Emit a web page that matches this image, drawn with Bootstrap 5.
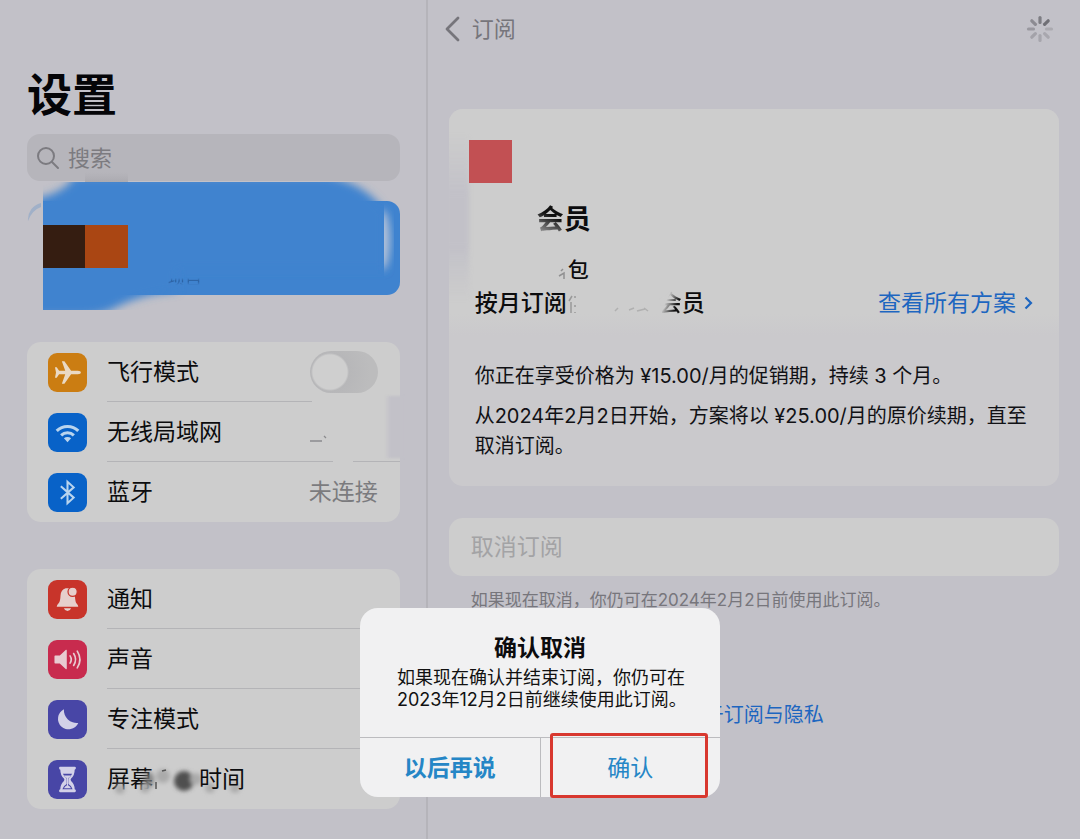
<!DOCTYPE html>
<html lang="zh-CN">
<head>
<meta charset="utf-8">
<meta name="viewport" content="width=device-width, initial-scale=1">
<title>设置 - 订阅</title>
<link href="https://cdn.jsdelivr.net/npm/bootstrap@5.3.0/dist/css/bootstrap.min.css" rel="stylesheet">
<style>
:root{--page:#c2c1c8;--panel:#cdcdcd;--line:#b4b4b7;--blue:#1d66c0}
body{font-family:Inter,"Noto Sans CJK SC",sans-serif;background:var(--page);color:#0c0c0e;font-size:23px;line-height:30px}
.sidebar{flex:0 0 39.6%;padding:65px 26px 30px 27px;border-right:2px solid #b5b4ba}
.page-title{font-size:45px;line-height:62px;font-weight:700;margin:0 0 7px;color:#050508}
.search-box{height:47px;border-radius:13px;background:#b6b5bb;padding-left:9px;gap:7px;margin-bottom:20px}
.search-box input,.search-box input:focus{background:none;border:0;padding:0;box-shadow:none;font-size:22px;line-height:30px;color:#333}
.search-box input::placeholder{color:#7c7b80;opacity:1}
.account{height:94px;margin-bottom:47px;display:block}
.account svg{position:absolute;left:0;top:-31px;z-index:1}
.account-note{position:absolute;left:141px;top:68px;z-index:2;font-size:17px;line-height:20px;color:#2a5f9f;-webkit-mask-image:linear-gradient(transparent 45%,#000 60%,transparent 80%);mask-image:linear-gradient(transparent 45%,#000 60%,transparent 80%)}
.group{--bs-list-group-bg:var(--panel);border-radius:14px;background:var(--panel);margin-bottom:47px}
.group-row{height:60px;padding-left:21px;padding-right:22px;gap:20px;color:#0c0c0e;text-decoration:none;position:relative}
.group-row:not(:last-child)::after{content:"";position:absolute;left:80px;right:0;bottom:0;height:1px;background:var(--line)}
.group-row.cut-short::after{right:88px}
.group-row.cut-gap::after{background:linear-gradient(90deg,var(--line) 226px,transparent 226px,transparent 246px,var(--line) 246px)}
.tile{width:39px;height:39px;border-radius:9px;flex:none}
.tile svg{display:block;width:100%;height:100%}
.t-orange{background:#cb7d12}.t-blue{background:#0862c8}.t-red{background:#c8342a}.t-pink{background:#c82b4e}.t-indigo{background:#4846a6}
.value{color:#7b7b7e}
.form-check-input.toggle{width:68px;height:42px;margin:0;border:0;border-radius:21px;background:radial-gradient(circle at 20px 50%,#cfcfcf 17px,#b7b7b9 19px,#bcbcbd 40px)}
.worn::before{content:"";position:absolute;right:-3px;top:-6px;width:18px;height:62px;background:linear-gradient(90deg,transparent,var(--page) 5px);filter:blur(1px)}
.detail{padding:0 21px 30px 21px;min-width:0}
.topbar{height:58px;margin-bottom:51px;margin-left:-4px}
.back{color:#76757b;text-decoration:none;font-size:22px;gap:12px}
.plan{border-radius:14px;overflow:hidden;background:#cac9cc;margin-bottom:32px;position:relative}
.plan-head{background:linear-gradient(var(--panel) 205px,#cac9cc 226px);padding:31px 26px 16px 20px;min-height:226px;position:relative}
.plan-head::before{content:"";position:absolute;left:-4px;top:26px;width:24px;height:165px;background:linear-gradient(transparent,var(--page) 60px,var(--page) 110px,transparent);filter:blur(2px)}
.logo{width:43px;height:43px;background:#c25053;position:relative}
.plan-name{font-size:27px;line-height:36px;font-weight:700;margin:19px 0 0 68px}
.faded{background:linear-gradient(25deg,#b5b5b6,#111 60%);-webkit-background-clip:text;background-clip:text;color:transparent}
.faded-end{background:linear-gradient(115deg,#cdcdcd 35%,#111 70%);-webkit-background-clip:text;background-clip:text;color:transparent}
.plan-pack{font-size:21px;line-height:30px;font-weight:500;margin:17px 0 0 89px;gap:1px}
.plan-term{font-weight:500;margin-top:3px;padding-left:6px}
.blue-link{color:var(--blue);text-decoration:none}
.plan-body{font-size:20px;padding:26px 26px 26px;color:#111115}
.plan-body p{margin:0 0 10px}
.plan-body p:last-child{margin:0 0 -1px}
.cancel{height:58px;border-radius:14px;background:var(--panel);border:0;color:#a3a3a5;text-align:left;padding:0 22px;width:100%;display:block}
.note{font-size:17px;line-height:24px;color:#77767c;margin:12px 22px 88px}
.privacy{font-size:20px;line-height:30px}
.sheet-layer{position:fixed;inset:0;z-index:10;padding-bottom:42px;pointer-events:none}
.sheet{width:360px;border-radius:18px;background:#f1f1f2;pointer-events:auto}
.sheet h2{font-size:23px;line-height:30px;font-weight:700;margin:0;padding-top:25px;text-align:center}
.sheet p{font-size:18px;line-height:22px;margin:0;padding:4px 24px 26px 37px;color:#111}
.sheet-actions{border-top:1px solid #bcbcbf}
.sheet-actions button{flex:1 1 0;height:59px;border:0;background:none;color:#2586c6;position:relative;padding:0}
.sheet-actions button+button{border-left:1px solid #bcbcbf}
.ring{position:absolute;left:9px;right:12px;top:-5px;bottom:-1px;border:3px solid #d8382f;border-radius:3px}
</style>
</head>
<body>
<div class="d-flex min-vh-100">
  <aside class="sidebar">
    <h1 class="page-title">设置</h1>
    <label class="search-box d-flex align-items-center" for="q">
      <svg class="flex-shrink-0" width="25" height="26" viewBox="0 0 25 26" fill="none" stroke="#7c7b80" stroke-width="2" stroke-linecap="round"><circle cx="10" cy="11" r="8"/><path d="M16 17l6 6"/></svg>
      <input id="q" class="form-control" type="search" placeholder="搜索">
    </label>
    <a class="account position-relative" href="#" aria-label="项目">
      <svg width="373" height="145" viewBox="0 0 373 145">
        <defs><filter id="soft" x="-20%" y="-30%" width="140%" height="160%"><feGaussianBlur stdDeviation="4"/></filter><clipPath id="area"><path d="M16 12H373V140H16z"/></clipPath><clipPath id="edge"><path d="M357 30h16v80h-16z"/></clipPath>
        <linearGradient id="fade" x2="0" y2="1"><stop stop-color="#adacb2" stop-opacity="0"/><stop offset="1" stop-color="#a9a8ae"/></linearGradient></defs>
        <path d="M58 2h43v11H58z" fill="url(#fade)"/>
        <path d="M1 51a17 17 0 0 1 13-18v4Q5 40 1 51z" fill="#7d9fc8" opacity=".5"/>
        <path d="M16 31H360a13 13 0 0 1 13 13V112a13 13 0 0 1-13 13H16z" fill="#3f83cf"/>
        <g clip-path="url(#area)"><path d="M0 30Q35 26 48 6H300Q340 14 358 42V100H150V121Q112 124 84 140Q70 146 50 146H0z" fill="#3f83cf" filter="url(#soft)"/></g>
        <path d="M16 55h43v43H16z" fill="#351d11"/><path d="M58 55h43v43H58z" fill="#aa4613"/>
        <g clip-path="url(#edge)"><ellipse cx="355" cy="70" rx="8" ry="30" fill="#b4c2d8" filter="url(#soft)"/></g>
      </svg>
      <span class="account-note">项目</span>
    </a>

    <div class="group list-group">
      <div class="group-row cut-short d-flex align-items-center">
        <span class="tile t-orange"><svg viewBox="0 0 38 38" fill="#ead9c4"><path d="M32 19q0 1.600-3 1.700h-6.500L16 30h-2.500l3.300-9.300h-6L8.500 24H6.800l1-5-1-5h1.700l2.300 3.300h6L13.500 8H16l6.500 9.300H29q3 .1 3 1.700z"/></svg></span>
        <label class="flex-grow-1" for="fly">飞行模式</label>
        <input id="fly" class="form-check-input toggle" type="checkbox" role="switch">
      </div>
      <a href="#" class="group-row cut-gap worn d-flex align-items-center">
        <span class="tile t-blue"><svg viewBox="0 0 38 38" fill="none" stroke="#b9d4ee" stroke-width="3"><path d="M8.500 17.500a15 15 0 0 1 21 0M12.800 21.800a9 9 0 0 1 12.400 0"/><path d="M15.500 24.700a5 5 0 0 1 7 0L19 28.500z" fill="#b9d4ee" stroke="none"/></svg></span>
        <span class="flex-grow-1">无线局域网</span>
        <svg width="69" height="30" viewBox="0 0 69 30" fill="none" stroke="#8b8b8e" stroke-width="1.300"><path d="M1 24h12M15 19l2 2"/></svg>
      </a>
      <a href="#" class="group-row d-flex align-items-center">
        <span class="tile t-blue"><svg viewBox="0 0 38 38" fill="none" stroke="#b9d4ee" stroke-width="2"><path d="M12.500 13l12.500 11-6 5.500v-21l6 5.500L12.500 25"/></svg></span>
        <span class="flex-grow-1">蓝牙</span><span class="value">未连接</span>
      </a>
    </div>

    <div class="group list-group mb-0">
      <a href="#" class="group-row d-flex align-items-center">
        <span class="tile t-red"><svg viewBox="0 0 38 38" fill="#e6cfcc"><path d="M8.500 26q0-1.500 2-3.500 1.500-2 1.700-7.500.4-5.500 5-7h3.600q5 1.500 5.400 7 .3 5.500 1.300 7.500 2 2 2 3.500zM15.500 27.500h7q-1 2.800-3.500 2.800t-3.500-2.800z"/><circle cx="24" cy="11.500" r="4.500" stroke="#c8342a" stroke-width="1.200"/></svg></span>
        <span>通知</span>
      </a>
      <a href="#" class="group-row d-flex align-items-center">
        <span class="tile t-pink"><svg viewBox="0 0 38 38" fill="#e8cbd1"><path d="M7 15h4.500l6-5.500q.8-.3.8.8v17.400q0 1-.8.700L11.500 23H7q-.7 0-.7-.8v-6.400q0-.8.700-.8z"/><path d="M21.500 15.500q2.300 3.500 0 7M25 13.200q3.700 5.800 0 11.600M28.500 10.800q5.300 8.200 0 16.400" fill="none" stroke="#e8cbd1" stroke-width="1.600" stroke-linecap="round"/></svg></span>
        <span>声音</span>
      </a>
      <a href="#" class="group-row d-flex align-items-center">
        <span class="tile t-indigo"><svg viewBox="0 0 38 38" fill="#d3d1e8"><path d="M15.500 9A12.500 12.500 0 0 0 29.500 22.300 10.300 10.300 0 1 1 15.500 9z"/></svg></span>
        <span>专注模式</span>
      </a>
      <a href="#" class="group-row d-flex align-items-center">
        <span class="tile t-indigo"><svg viewBox="0 0 38 38"><path d="M12 6.500h14q1.200 0 1.200 1.300T26 9.500q0 5.500-3.500 8.500-1 1.200 0 2.400Q26 23.500 26 28.500q1.200.2 1.200 1.500T26 31.500H12q-1.200 0-1.200-1.500t1.200-1.500q0-5 3.500-8.100 1-1.200 0-2.400Q12 15 12 9.500q-1.200-.2-1.200-1.700T12 6.500z" fill="#d3d1e8"/><path d="M14.500 13.500h9q-1 2.500-3.700 4.500v5.500q3 1.500 4.200 5h-10q1.200-3.500 4.200-5V18q-2.700-2-3.700-4.500z" fill="#4846a6"/><path d="M15.500 15h7q-1.500 2-3 2.700V24.500q2 1 3 3h-7q1-2 3-3v-6.800q-1.500-.7-3-2.700z" fill="#d3d1e8"/></svg></span>
        <span class="d-flex align-items-center">屏幕<svg width="46" height="30" viewBox="0 0 46 30" overflow="visible"><defs><filter id="smear" x="-50%" y="-50%" width="200%" height="200%"><feGaussianBlur stdDeviation="2"/></filter></defs><g filter="url(#smear)"><ellipse cx="-4" cy="16" rx="5" ry="8" fill="#777" opacity=".8"/><circle cx="10" cy="12" r="7" fill="#aaa"/><circle cx="31" cy="17" r="10" fill="#505050"/><circle cx="43" cy="15" r="6" fill="#aaa"/><circle cx="-33" cy="25" r="5" fill="#aaa"/><circle cx="-8" cy="24" r="5" fill="#aaa"/><circle cx="57" cy="24" r="5" fill="#aaa"/><circle cx="82" cy="24" r="5" fill="#aaa"/></g><path d="M9 7l4-1M3 18v7" stroke="#555" stroke-width="1.500"/></svg>时间</span>
      </a>
    </div>
  </aside>

  <main class="detail flex-grow-1">
    <nav class="topbar d-flex align-items-center justify-content-between">
      <a class="back d-flex align-items-center" href="#"><svg width="15" height="26" viewBox="0 0 15 26" fill="none" stroke="#76757b" stroke-width="2.800" stroke-linecap="round" stroke-linejoin="round"><path d="M13 2L2 13l11 11"/></svg>订阅</a>
      <svg class="me-1" width="30" height="30" viewBox="-15 -15 30 30" stroke-width="3.200" stroke-linecap="round" role="img" aria-label="正在载入"><path d="M0-6.500V-11.500" stroke="#7d7d83"/><path d="M4.600-4.600l3.600-3.600" stroke="#6f6f75"/><path d="M6.500 0h5" stroke="#abaab0"/><path d="M4.600 4.600l3.600 3.600" stroke="#a8a7ae"/><path d="M0 6.500v5" stroke="#a6a5ac"/><path d="M-4.600 4.600l-3.600 3.600" stroke="#a3a2a9"/><path d="M-6.500 0h-5" stroke="#99989f"/><path d="M-4.600-4.600l-3.600-3.600" stroke="#8c8b92"/></svg>
    </nav>

    <section class="plan">
      <div class="plan-head">
        <div class="logo"></div>
        <h2 class="plan-name"><span class="faded">会</span>员</h2>
        <div class="plan-pack d-flex align-items-center"><svg width="9" height="30" viewBox="0 0 9 30" fill="none" stroke="#909091" stroke-width="1.500"><path d="M1 21l5-3v6M3 16l2-2"/></svg>包</div>
        <div class="plan-term d-flex align-items-center">
          <span>按月订阅</span>
          <svg width="92" height="30" viewBox="0 0 92 30" fill="none" stroke="#999" stroke-width="1.500"><path d="M5 8l-3 5M4 14v11M8 8v2M8 17v2M8 24v1" /><path d="M48 23l3-3M62 22l5-2M70 23l8-2M77 20l4 3" opacity=".55"/></svg>
          <span><span class="faded-end">会</span>员</span>
          <a class="blue-link fw-normal ms-auto d-flex align-items-center gap-2" href="#">查看所有方案<svg width="9" height="14" viewBox="0 0 9 14" fill="none" stroke="#1d66c0" stroke-width="2.200"><path d="M1.500 1.500L7 7l-5.500 5.500"/></svg></a>
        </div>
      </div>
      <div class="plan-body">
        <p>你正在享受价格为 ¥15.00/月的促销期，持续 3 个月。</p>
        <p>从2024年2月2日开始，方案将以 ¥25.00/月的原价续期，直至取消订阅。</p>
      </div>
    </section>

    <button class="cancel" type="button" disabled>取消订阅</button>
    <p class="note">如果现在取消，你仍可在2024年2月2日前使用此订阅。</p>
    <div class="text-center privacy"><a class="blue-link" href="#">关于订阅与隐私</a></div>
  </main>
</div>

<div class="sheet-layer d-flex align-items-end justify-content-center">
  <div class="sheet" role="alertdialog" aria-labelledby="sheet-title" aria-describedby="sheet-text">
    <h2 id="sheet-title">确认取消</h2>
    <p id="sheet-text">如果现在确认并结束订阅，你仍可在2023年12月2日前继续使用此订阅。</p>
    <div class="sheet-actions d-flex">
      <button type="button" class="fw-bold">以后再说</button>
      <button type="button">确认<span class="ring"></span></button>
    </div>
  </div>
</div>
<script src="https://cdn.jsdelivr.net/npm/bootstrap@5.3.0/dist/js/bootstrap.bundle.min.js"></script>
</body>
</html>
